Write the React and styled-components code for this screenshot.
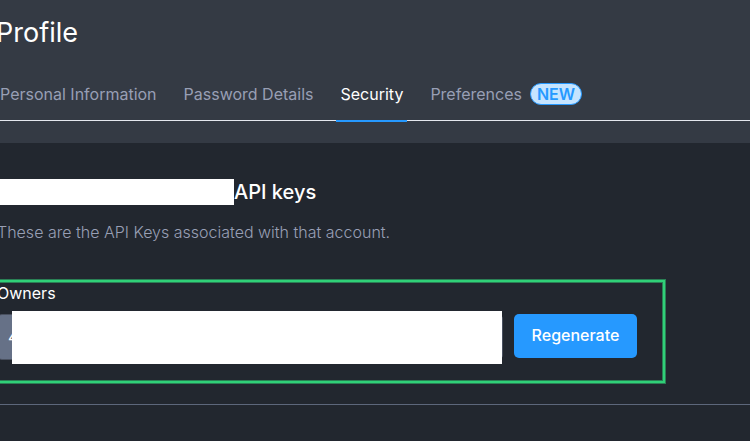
import React from "react";
import styled, { createGlobalStyle } from "styled-components";

const GlobalStyle = createGlobalStyle`
  *, *::before, *::after { box-sizing: border-box; }
  body {
    margin: 0;
    overflow-x: hidden;
    background: #22272f;
    color: #ffffff;
    font: 400 16px/24px Inter, sans-serif;
  }
`;

const Page = styled.div`
  min-height: 100vh;
  overflow: hidden;
  background: #22272f;
`;

const Header = styled.header`
  padding: 13px 0 22px;
  background: #343a44;
`;

const Title = styled.h1`
  margin: 0 0 27px -4px;
  font-size: 27px;
  line-height: 40px;
  font-weight: 400;
`;

const TabBar = styled.nav`
  display: flex;
  gap: 19px;
  margin-left: -4px;
  border-bottom: 1px solid #e4e7ee;
`;

const Tab = styled.a`
  display: flex;
  align-items: center;
  gap: 8px;
  height: 42px;
  margin-bottom: -2px;
  padding: 0 4px 12px;
  border-bottom: 2px solid ${({ $active }) => ($active ? "#2699ff" : "transparent")};
  color: ${({ $active }) => ($active ? "#ffffff" : "#989fb5")};
  text-decoration: none;
  white-space: nowrap;
`;

const Badge = styled.span`
  padding: 0 6px;
  border: 1px solid #2699ff;
  border-radius: 11px;
  background: #c5e4ff;
  color: #2699ff;
  font-weight: 600;
  line-height: 20px;
`;

const Content = styled.main`
  padding-top: 36px;
`;

const SectionHeading = styled.h2`
  display: flex;
  align-items: center;
  margin: 0;
  font-size: 20px;
  line-height: 26px;
  font-weight: 500;
`;

const HiddenName = styled.span`
  width: 234px;
  height: 26px;
  background: #ffffff;
`;

const Description = styled.p`
  margin: 15px 0 36px -3px;
  color: #989fb5;
  font-weight: 300;
`;

const KeyPanel = styled.section`
  width: 670px;
  max-width: 100%;
  margin-left: -5px;
  padding: 0 26px 21px 0;
  border: 2px solid #30d078;
  box-shadow: 0 0 0 1px #2a8055, inset 0 0 0 1px #2a8055;
`;

const Label = styled.label`
  display: block;
  margin-bottom: 10px;
  line-height: 22px;
`;

const KeyRow = styled.div`
  display: flex;
  gap: 11px;
`;

const KeyField = styled.div`
  position: relative;
  flex: 1;
`;

const KeyInput = styled.input`
  display: block;
  width: 100%;
  height: 46px;
  padding: 0 10px;
  border: 1px solid #4a5160;
  border-radius: 5px;
  background: #667187;
  color: #ffffff;
  font: inherit;
`;

const KeyMask = styled.span`
  position: absolute;
  inset: -3px 1px -4px 15px;
  background: #ffffff;
`;

const RegenerateButton = styled.button`
  width: 123px;
  height: 44px;
  padding: 0 0 3px;
  border: 0;
  border-radius: 5px;
  background: #2699ff;
  color: #ffffff;
  font: 500 16px/24px Inter, sans-serif;
`;

const Divider = styled.hr`
  margin: 21px 0 0;
  border: 0;
  border-top: 1px solid #5d677b;
`;

const tabs = [
  { label: "Personal Information" },
  { label: "Password Details" },
  { label: "Security", active: true },
  { label: "Preferences", badge: "NEW" },
];

export default function App() {
  return (
    <>
      <GlobalStyle />
      <Page>
        <Header>
          <Title>Profile</Title>
          <TabBar>
            {tabs.map(({ label, active, badge }) => (
              <Tab
                key={label}
                href="#"
                $active={active}
                aria-current={active ? "page" : undefined}
              >
                {label}
                {badge && <Badge>{badge}</Badge>}
              </Tab>
            ))}
          </TabBar>
        </Header>
        <Content>
          <SectionHeading>
            <HiddenName />
            API keys
          </SectionHeading>
          <Description>These are the API Keys associated with that account.</Description>
          <KeyPanel>
            <Label htmlFor="owners-key">Owners</Label>
            <KeyRow>
              <KeyField>
                <KeyInput id="owners-key" readOnly value="4" />
                <KeyMask />
              </KeyField>
              <RegenerateButton type="button">Regenerate</RegenerateButton>
            </KeyRow>
          </KeyPanel>
          <Divider />
        </Content>
      </Page>
    </>
  );
}
